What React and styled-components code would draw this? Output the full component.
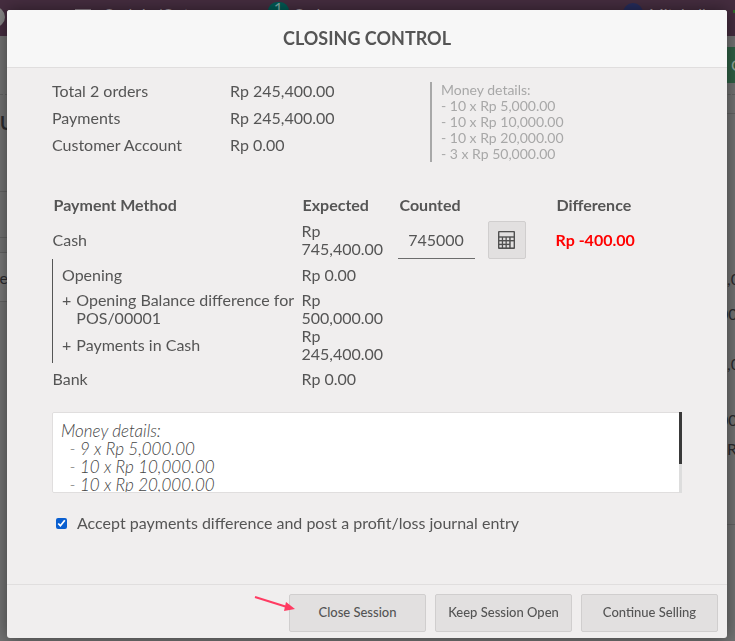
import React, { useState } from "react";
import styled, { createGlobalStyle, ThemeProvider } from "styled-components";

const theme = {
  text: "#555555",
  muted: "#a8a8a8",
  danger: "#ff0000",
  surface: "#f0eeee",
  header: "#f7f7f7",
  button: "#e2e0e0",
  line: "#e0dede",
  topbar: "#452d3f",
  page: "#727272",
  pageLine: "#626262",
  font: `Lato, "Open Sans", sans-serif`,
};

const GlobalStyle = createGlobalStyle`
  *, *::before, *::after {
    box-sizing: border-box;
  }

  body {
    margin: 0;
    overflow: hidden;
    background: #727272;
  }

  button, input, textarea {
    font-family: inherit;
    color: inherit;
  }
`;

/* Dimmed point of sale screen behind the dialog */

const Page = styled.div`
  min-height: 100vh;
  color: #2b2b2e;
  background: ${(props) => props.theme.page};
  font-family: ${(props) => props.theme.font};
  font-size: 16px;
  line-height: 18px;
`;

const TopBar = styled.header`
  display: grid;
  grid-template-columns: 75px 193px 355px 1fr auto;
  align-items: start;
  height: 36px;
  overflow: hidden;
  color: #a79ea5;
  background: ${(props) => props.theme.topbar};
`;

const TopItem = styled.div`
  display: flex;
  gap: 4px;
  padding-top: ${(props) => props.$top}px;
`;

const TopLabel = styled.span`
  padding-top: ${(props) => props.$top}px;
`;

const Logo = styled.span`
  width: 20px;
  height: 20px;
  margin-left: -15px;
  border-radius: 50%;
  background: #858585;
`;

const MoneyMark = styled.span`
  width: 16px;
  height: 12px;
  margin: 4px 8px 0 0;
  border: 2px solid #8f838c;
`;

const Badge = styled.span`
  width: 21px;
  height: 18px;
  border-radius: 9px;
  color: #7fa9a4;
  background: #005a54;
  font-size: 16px;
  line-height: 12px;
  text-align: center;
`;

const Avatar = styled.span`
  width: 20px;
  height: 20px;
  margin-right: 2px;
  border-radius: 50%;
  background: #252c5c;
`;

const Online = styled.span`
  width: 2px;
  height: 3px;
  background: #2f6a2a;
`;

const Panels = styled.div`
  display: flex;
  justify-content: space-between;
`;

const Panel = styled.div`
  width: ${(props) => props.$width}px;
  overflow: hidden;
  white-space: nowrap;
`;

const Strip = styled.div`
  height: ${(props) => props.$height}px;
  padding-top: ${(props) => props.$top || 0}px;
  border-bottom: 1px ${(props) => (props.$dashed ? "dashed" : "solid")}
    ${(props) => props.theme.pageLine};
  background: ${(props) => (props.$light ? "#787878" : "transparent")};
  direction: ${(props) => (props.$fromRight ? "rtl" : "ltr")};
`;

const ProductTitle = styled.div`
  font-size: 18px;
  font-weight: 700;
`;

const PageButton = styled.div`
  height: 36px;
  margin-top: 11px;
  padding: 9px 0 0 12px;
  color: #93a79b;
  background: #2f6045;
`;

const Amount = styled.div`
  height: ${(props) => props.$height}px;
  padding-left: ${(props) => (props.$indent ? 8 : 0)}px;
`;

/* Dialog */

const Overlay = styled.div`
  position: fixed;
  inset: 0;
  display: flex;
  padding: 10px 8px 3px 7px;
`;

const Dialog = styled.section`
  display: flex;
  flex: 1;
  flex-direction: column;
  border-radius: 3px;
  color: ${(props) => props.theme.text};
  background: ${(props) => props.theme.surface};
  box-shadow: 0 0 16px rgba(0, 0, 0, 0.45);
  font-family: ${(props) => props.theme.font};
  font-size: 16px;
  line-height: 18px;
`;

const DialogHeader = styled.header`
  padding: 18px 0 19px;
  border-bottom: 1px solid ${(props) => props.theme.line};
  border-radius: 3px 3px 0 0;
  background: ${(props) => props.theme.header};
`;

const DialogTitle = styled.h1`
  margin: 0;
  font-size: 18px;
  font-weight: 700;
  line-height: 20px;
  text-align: center;
`;

const DialogBody = styled.main`
  flex: 1;
  padding: 9px 45px;
`;

const Overview = styled.div`
  display: flex;
  gap: 20px;
  align-items: flex-start;
  justify-content: space-between;
`;

const Totals = styled.dl`
  display: grid;
  grid-template-columns: 178px auto;
  margin: 0;
  line-height: 27px;

  dd {
    margin: 0;
  }
`;

const MoneyNote = styled.div`
  flex: 0 0 40%;
  margin-top: 5px;
  padding-left: 9px;
  border-left: 2px solid ${(props) => props.theme.muted};
  color: ${(props) => props.theme.muted};
  font-size: 14px;
  line-height: 16px;
  white-space: pre-line;
`;

const PaymentTable = styled.table`
  width: 100%;
  margin-top: 27px;
  border-collapse: collapse;
  table-layout: fixed;
  text-align: left;

  th {
    height: 32px;
    padding: 0 1px;
    font-weight: 700;
  }

  td {
    height: 32px;
    padding: 0;
  }
`;

const Col = styled.col`
  width: ${(props) => props.$width};
`;

const DetailCell = styled.td`
  && {
    padding-left: 9px;
    border-left: 1px solid ${(props) => props.theme.text};
  }
`;

const Detail = styled.div`
  display: flex;
  gap: 5px;
`;

const CountedField = styled.div`
  display: flex;
  align-items: center;
  gap: 13px;
  margin-left: -1px;
`;

const CountedInput = styled.input`
  width: 77px;
  height: 38px;
  padding: 0;
  border: 0;
  border-bottom: 1px solid #6c6c6c;
  background: transparent;
  font-size: 16px;
  text-align: center;
  outline: none;
`;

const Button = styled.button`
  display: flex;
  align-items: center;
  justify-content: center;
  width: ${(props) => (props.$icon ? 38 : 137)}px;
  height: 38px;
  padding: ${(props) => (props.$icon ? 0 : "0 0 2px")};
  border: 1px solid #d0cece;
  border-radius: 2px;
  background: ${(props) => props.theme.button};
  font-size: 13px;
  font-weight: 500;
`;

const Difference = styled.span`
  color: ${(props) => props.theme.danger};
  font-weight: 700;
`;

const NotesBox = styled.div`
  position: relative;
  margin-top: 17px;
`;

const NotesInput = styled.textarea`
  display: block;
  width: 100%;
  height: 81px;
  padding: 9px 8px;
  border: 1px solid ${(props) => props.theme.line};
  border-radius: 2px;
  background: #ffffff;
  color: #444444;
  font-size: 17px;
  font-style: italic;
  font-weight: 300;
  line-height: 18px;
  resize: none;
  outline: none;
  scrollbar-width: none;
`;

const ScrollTrack = styled.div`
  position: absolute;
  top: 0;
  right: 0;
  bottom: 0;
  width: 3px;
  background: #dddddd;
  pointer-events: none;
`;

const ScrollThumb = styled.div`
  height: 64%;
  background: #393939;
`;

const Accept = styled.label`
  display: flex;
  align-items: center;
  gap: 10px;
  margin-top: 21px;
  padding-left: 4px;

  input {
    width: 11px;
    height: 11px;
    margin: 0;
    accent-color: #0a5fd0;
  }
`;

const DialogFooter = styled.footer`
  display: flex;
  justify-content: flex-end;
  gap: 9px;
  padding: 9px 9px 6px;
  border-top: 1px solid ${(props) => props.theme.line};
`;

const Marked = styled.div`
  position: relative;
`;

const Pointer = styled.svg`
  position: absolute;
  top: 0;
  left: -36px;
  pointer-events: none;
`;

const CalculatorIcon = () => (
  <svg width="17" height="18" viewBox="0 0 17 18" aria-hidden="true">
    <rect width="17" height="18" rx="1" fill="#505050" />
    <g fill="#e2e0e0">
      <rect x="1.4" y="1.3" width="14.2" height="4" />
      {[1.4, 5.1, 8.8].map((x) =>
        [6.7, 10.4, 14.1].map((y) => (
          <rect key={`${x}-${y}`} x={x} y={y} width="2.4" height="2.3" />
        ))
      )}
      <rect x="12.7" y="6.7" width="2.9" height="2.3" />
      <rect x="12.7" y="10.4" width="2.9" height="6" />
    </g>
  </svg>
);

const orderNote = `Money details:
- 10 x Rp 5,000.00
- 10 x Rp 10,000.00
- 10 x Rp 20,000.00
- 3 x Rp 50,000.00`;

const closingNote = `Money details:
  - 9 x Rp 5,000.00
  - 10 x Rp 10,000.00
  - 10 x Rp 20,000.00
  - 8 x Rp 50,000.00
`;

const cashDetails = [
  { name: "Opening", amount: "Rp 0.00" },
  {
    sign: "+",
    name: "Opening Balance difference for POS/00001",
    amount: "Rp 500,000.00",
  },
  { sign: "+", name: "Payments in Cash", amount: "Rp 245,400.00" },
];

const Background = () => (
  <Page aria-hidden="true">
    <TopBar>
      <TopItem $top={7}>
        <Logo />
      </TopItem>
      <TopItem $top={5}>
        <MoneyMark />
        <span>Cash In/Out</span>
      </TopItem>
      <TopItem $top={2}>
        <Badge>1</Badge>
        <TopLabel $top={3}>Orders</TopLabel>
      </TopItem>
      <TopItem $top={3}>
        <Avatar />
        <TopLabel $top={2}>Mitchell</TopLabel>
      </TopItem>
      <TopItem $top={10}>
        <Online />
      </TopItem>
    </TopBar>
    <Panels>
      <Panel $width={8}>
        <Strip $height={59} $dashed />
        <Strip $height={97} $top={19}>
          <ProductTitle>U</ProductTitle>
        </Strip>
        <Strip $height={46} />
        <Strip $height={15} />
        <Strip $height={49} $top={16} $light $fromRight>
          te
        </Strip>
      </Panel>
      <Panel $width={16}>
        <PageButton>C</PageButton>
        <Strip $height={12} $dashed />
        <Strip $height={19} />
        <Strip $height={411} $top={156}>
          <Amount $height={35} $indent>
            ,0
          </Amount>
          <Amount $height={50}>00</Amount>
          <Amount $height={56} $indent>
            ,0
          </Amount>
          <Amount $height={29}>00</Amount>
          <Amount $height={18} $indent>
            R
          </Amount>
        </Strip>
      </Panel>
    </Panels>
  </Page>
);

const PaymentMethods = ({ counted, onCount }) => (
  <PaymentTable>
    <colgroup>
      <Col $width="249px" />
      <Col $width="97px" />
      <Col $width="157px" />
      <Col />
    </colgroup>
    <thead>
      <tr>
        <th>Payment Method</th>
        <th>Expected</th>
        <th>Counted</th>
        <th>Difference</th>
      </tr>
    </thead>
    <tbody>
      <tr>
        <td>Cash</td>
        <td>Rp 745,400.00</td>
        <td>
          <CountedField>
            <CountedInput
              aria-label="Counted cash"
              value={counted}
              onChange={(e) => onCount(e.target.value)}
            />
            <Button type="button" $icon aria-label="Count money">
              <CalculatorIcon />
            </Button>
          </CountedField>
        </td>
        <td>
          <Difference>Rp -400.00</Difference>
        </td>
      </tr>
      {cashDetails.map(({ sign, name, amount }) => (
        <tr key={name}>
          <DetailCell>
            <Detail>
              {sign && <span>{sign}</span>}
              <span>{name}</span>
            </Detail>
          </DetailCell>
          <td>{amount}</td>
          <td />
          <td />
        </tr>
      ))}
      <tr>
        <td>Bank</td>
        <td>Rp 0.00</td>
        <td />
        <td />
      </tr>
    </tbody>
  </PaymentTable>
);

const Notes = ({ value, onChange }) => {
  const [offset, setOffset] = useState(0);

  return (
    <NotesBox>
      <NotesInput
        aria-label="Notes"
        value={value}
        onChange={(e) => onChange(e.target.value)}
        onScroll={(e) =>
          setOffset(
            (e.target.scrollTop / e.target.scrollHeight) *
              e.target.clientHeight
          )
        }
      />
      <ScrollTrack>
        <ScrollThumb style={{ transform: `translateY(${offset}px)` }} />
      </ScrollTrack>
    </NotesBox>
  );
};

const App = () => {
  const [counted, setCounted] = useState("745000");
  const [notes, setNotes] = useState(closingNote);
  const [accepted, setAccepted] = useState(true);

  return (
    <ThemeProvider theme={theme}>
      <GlobalStyle />
      <Background />
      <Overlay>
        <Dialog role="dialog" aria-labelledby="closing-title">
          <DialogHeader>
            <DialogTitle id="closing-title">CLOSING CONTROL</DialogTitle>
          </DialogHeader>
          <DialogBody>
            <Overview>
              <Totals>
                <dt>Total 2 orders</dt>
                <dd>Rp 245,400.00</dd>
                <dt>Payments</dt>
                <dd>Rp 245,400.00</dd>
                <dt>Customer Account</dt>
                <dd>Rp 0.00</dd>
              </Totals>
              <MoneyNote>{orderNote}</MoneyNote>
            </Overview>
            <PaymentMethods counted={counted} onCount={setCounted} />
            <Notes value={notes} onChange={setNotes} />
            <Accept>
              <input
                type="checkbox"
                checked={accepted}
                onChange={(e) => setAccepted(e.target.checked)}
              />
              Accept payments difference and post a profit/loss journal entry
            </Accept>
          </DialogBody>
          <DialogFooter>
            <Marked>
              <Button type="button">Close Session</Button>
              <Pointer width="44" height="22" viewBox="0 0 44 22">
                <path d="M2 3 L34 13" stroke="#ff3b62" strokeWidth="2" />
                <path d="M33 8 L42 15 L31 17 Z" fill="#ff3b62" />
              </Pointer>
            </Marked>
            <Button type="button">Keep Session Open</Button>
            <Button type="button">Continue Selling</Button>
          </DialogFooter>
        </Dialog>
      </Overlay>
    </ThemeProvider>
  );
};

export default App;
